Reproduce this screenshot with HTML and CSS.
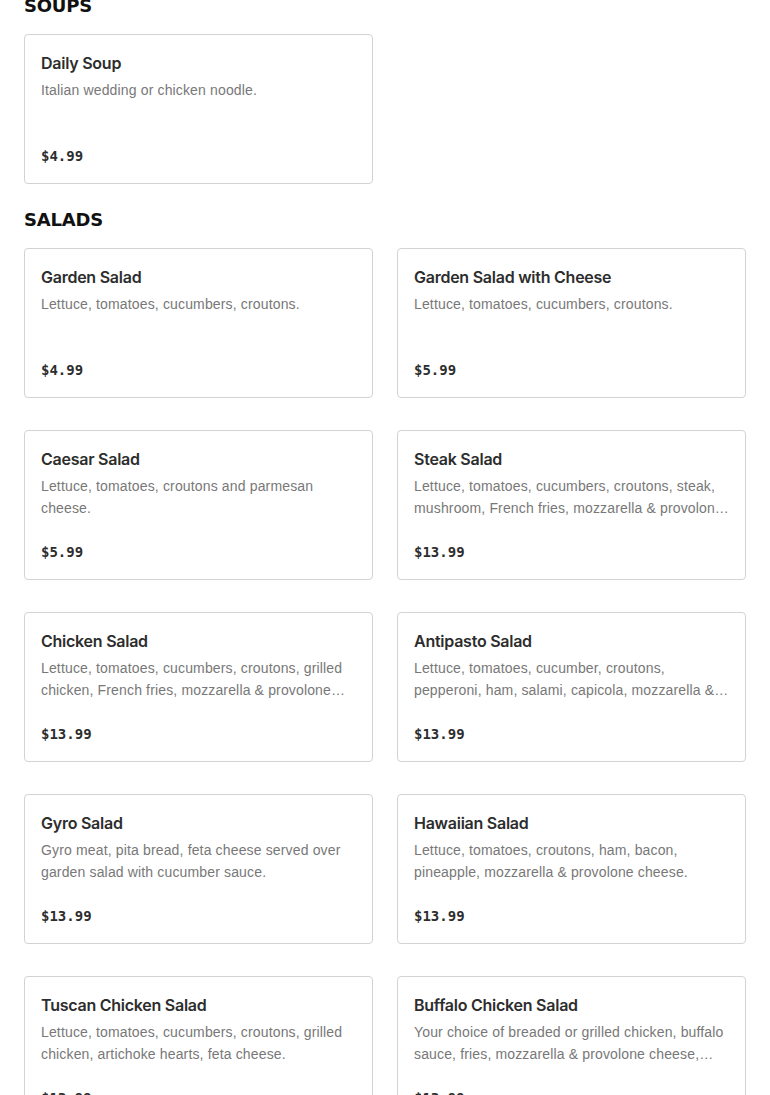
FILE: index.html
```html
<!DOCTYPE html>
<html lang="en">
<head>
<meta charset="utf-8">
<title>Menu</title>
<link rel="stylesheet" href="styles.css">
</head>
<body>
<main class="menu">
  <section class="section section-first">
    <h2 class="section-title">SOUPS</h2>
    <div class="grid">
      <article class="card">
        <h3 class="card-title">Daily Soup</h3>
        <p class="card-desc">Italian wedding or chicken noodle.</p>
        <div class="card-price">$4.99</div>
      </article>
    </div>
  </section>
  <section class="section">
    <h2 class="section-title">SALADS</h2>
    <div class="grid">
      <article class="card">
        <h3 class="card-title">Garden Salad</h3>
        <p class="card-desc">Lettuce, tomatoes, cucumbers, croutons.</p>
        <div class="card-price">$4.99</div>
      </article>
      <article class="card">
        <h3 class="card-title">Garden Salad with Cheese</h3>
        <p class="card-desc">Lettuce, tomatoes, cucumbers, croutons.</p>
        <div class="card-price">$5.99</div>
      </article>
      <article class="card">
        <h3 class="card-title">Caesar Salad</h3>
        <p class="card-desc">Lettuce, tomatoes, croutons and parmesan cheese.</p>
        <div class="card-price">$5.99</div>
      </article>
      <article class="card">
        <h3 class="card-title">Steak Salad</h3>
        <p class="card-desc">Lettuce, tomatoes, cucumbers, croutons, steak, mushroom, French fries, mozzarella &amp; provolone cheese.</p>
        <div class="card-price">$13.99</div>
      </article>
      <article class="card">
        <h3 class="card-title">Chicken Salad</h3>
        <p class="card-desc">Lettuce, tomatoes, cucumbers, croutons, grilled chicken, French fries, mozzarella &amp; provolone cheese.</p>
        <div class="card-price">$13.99</div>
      </article>
      <article class="card">
        <h3 class="card-title">Antipasto Salad</h3>
        <p class="card-desc">Lettuce, tomatoes, cucumber, croutons, pepperoni, ham, salami, capicola, mozzarella &amp; provolone cheese.</p>
        <div class="card-price">$13.99</div>
      </article>
      <article class="card">
        <h3 class="card-title">Gyro Salad</h3>
        <p class="card-desc">Gyro meat, pita bread, feta cheese served over garden salad with cucumber sauce.</p>
        <div class="card-price">$13.99</div>
      </article>
      <article class="card">
        <h3 class="card-title">Hawaiian Salad</h3>
        <p class="card-desc">Lettuce, tomatoes, croutons, ham, bacon, pineapple, mozzarella &amp; provolone cheese.</p>
        <div class="card-price">$13.99</div>
      </article>
      <article class="card">
        <h3 class="card-title">Tuscan Chicken Salad</h3>
        <p class="card-desc">Lettuce, tomatoes, cucumbers, croutons, grilled chicken, artichoke hearts, feta cheese.</p>
        <div class="card-price">$13.99</div>
      </article>
      <article class="card">
        <h3 class="card-title">Buffalo Chicken Salad</h3>
        <p class="card-desc">Your choice of breaded or grilled chicken, buffalo sauce, fries, mozzarella &amp; provolone cheese, ranch or blue cheese.</p>
        <div class="card-price">$13.99</div>
      </article>
    </div>
  </section>
</main>
</body>
</html>
```
FILE: styles.css
```css
html, body {
  margin: 0;
  padding: 0;
  background: #ffffff;
}
body {
  font-family: "Liberation Sans", Arial, sans-serif;
  color: #2d2d2d;
  overflow: hidden;
}
.menu {
  padding: 0 24px;
  margin-top: -6px;
}
.section {
  margin-bottom: 24px;
}
.section-title {
  margin: 0 0 16px;
  font-family: "DejaVu Sans", sans-serif;
  font-weight: 700;
  font-size: 18px;
  line-height: 24px;
  color: #111111;
  letter-spacing: -0.2px;
}
.grid {
  display: grid;
  grid-template-columns: 1fr 1fr;
  column-gap: 24px;
  row-gap: 32px;
}
.card {
  box-sizing: border-box;
  height: 150px;
  border: 1px solid #d3d3d3;
  border-radius: 4px;
  padding: 16px;
  display: flex;
  flex-direction: column;
}
.card-title {
  margin: 0;
  font-family: Inter, "Liberation Sans", Arial, sans-serif;
  font-weight: 600;
  font-size: 16px;
  line-height: 24px;
  letter-spacing: -0.25px;
  color: #2d2d2d;
}
.card-desc {
  margin: 4px 0 0;
  font-size: 14px;
  line-height: 22px;
  letter-spacing: 0.15px;
  color: #787878;
  display: -webkit-box;
  -webkit-line-clamp: 2;
  -webkit-box-orient: vertical;
  overflow: hidden;
}
.card-price {
  margin-top: auto;
  font-family: "DejaVu Sans Mono", "Liberation Mono", monospace;
  font-weight: 700;
  font-size: 14px;
  line-height: 22px;
  color: #2d2d2d;
}
```
